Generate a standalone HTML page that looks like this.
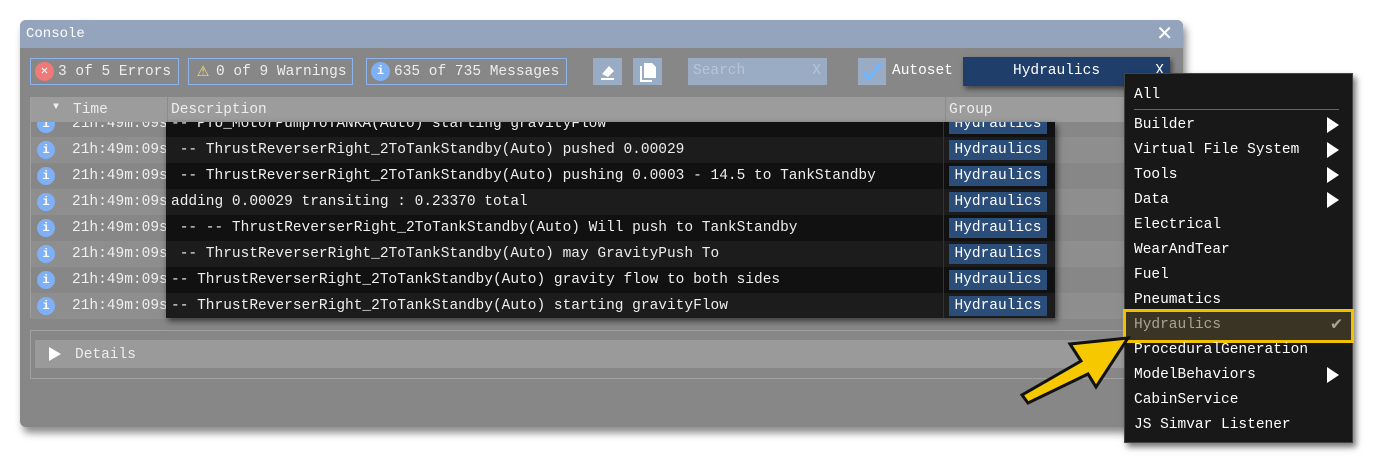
<!DOCTYPE html>
<html><head><style>
*{margin:0;padding:0;box-sizing:border-box}
body{width:1373px;height:464px;background:#fff;position:relative;overflow:hidden;font-family:"Liberation Mono",monospace;font-size:14.5px;color:#eee}
.a{position:absolute}
.win{left:20px;top:20px;width:1163px;height:407px;background:#878787;border-radius:6px;box-shadow:3px 6px 8px rgba(0,0,0,.45);overflow:hidden}
.title{left:0;top:0;width:1163px;height:28px;background:#95a4bd;color:#fff;font-size:14px;line-height:29px;padding-left:6px}
.btn{height:27px;border:1px solid #8fb4ec;white-space:nowrap;display:flex;align-items:center}
.ic{display:inline-block;width:19px;height:19px;border-radius:50%;text-align:center;line-height:19px;font-size:12px;color:#fff;margin:0 4px 0 4px;flex:none}
.row{position:absolute;left:11px;width:1140px;height:26px;line-height:26px}
.dot{position:absolute;left:6px;top:4px;width:18px;height:18px;border-radius:50%;background:#7fb0f5;color:#fff;text-align:center;line-height:18px;font-size:12px;font-weight:bold}
.tm{position:absolute;left:41px;color:#f0f0f0}
.dk{left:166px;top:122px;width:889px;height:196px;background:#111;box-shadow:2px 3px 6px rgba(0,0,0,.6);overflow:hidden}
.dr{position:absolute;left:0;width:889px;height:26px;line-height:26px;white-space:pre;padding-left:5px}
.tag{position:absolute;left:783px;top:3px;width:98px;height:20px;line-height:20px;background:#2a4d7a;text-align:center;color:#fff}
.dd{left:1124px;top:73px;width:229px;height:370px;background:#181818;border:1px solid #444;box-shadow:3px 4px 6px rgba(0,0,0,.55)}
.it{position:absolute;left:9px;height:25px;line-height:25px;color:#fff}
.tri{position:absolute;right:13px;width:0;height:0;border-left:12px solid #fff;border-top:8px solid transparent;border-bottom:8px solid transparent}
</style></head><body>
<div class="a win">
 <div class="a title">Console</div>
 <div class="a" style="right:10px;top:4px;color:#fff;font-size:20px;font-family:'Liberation Sans',sans-serif;line-height:20px">✕</div>
 <div class="a btn" style="left:10px;top:38px;width:149px"><span class="ic" style="background:#f07a7a">✕</span>3 of 5 Errors</div>
 <div class="a btn" style="left:168px;top:38px;width:165px"><span class="ic" style="background:none;color:#f2df7a;font-size:20px;width:20px;margin:0 3px 0 4px">⚠</span>0 of 9 Warnings</div>
 <div class="a btn" style="left:346px;top:38px;width:201px"><span class="ic" style="background:#7fb0f5;font-weight:bold">i</span>635 of 735 Messages</div>
 <div class="a" style="left:573px;top:38px;width:29px;height:27px;background:#9aabc4"></div>
 <svg class="a" style="left:578px;top:42px" width="20" height="20" viewBox="0 0 20 20"><path d="M4 12 L11 4 L16 9 L10 15 Z" fill="#fff"/><path d="M3 17 H16" stroke="#fff" stroke-width="2"/></svg>
 <div class="a" style="left:613px;top:38px;width:29px;height:27px;background:#9aabc4"></div>
 <svg class="a" style="left:617px;top:41px" width="22" height="22" viewBox="0 0 22 22"><path d="M7 2 H15 L19 6 V17 H7 Z" fill="#fff"/><path d="M4 5 V20 H15" stroke="#fff" stroke-width="2" fill="none"/></svg>
 <div class="a" style="left:668px;top:38px;width:139px;height:27px;background:#9aabc4;color:#b9c4d6;line-height:27px;padding-left:5px">Search<span style="position:absolute;right:6px">X</span></div>
 <div class="a" style="left:838px;top:38px;width:28px;height:27px;background:#9aabc4"></div>
 <svg class="a" style="left:840px;top:41px" width="24" height="22" viewBox="0 0 24 22"><path d="M3 11 L9 18 L21 2" stroke="#6fb6ff" stroke-width="3.5" fill="none"/></svg>
 <div class="a" style="left:872px;top:38px;line-height:27px;color:#fff">Autoset</div>
 <div class="a" style="left:943px;top:37px;width:207px;height:29px;background:#1f3f6a;line-height:29px;color:#fff;box-shadow:2px 3px 5px rgba(0,0,0,.5)"><span style="position:absolute;left:50px">Hydraulics</span><span style="position:absolute;right:6px">X</span></div>
 <div class="a" style="left:10px;top:77px;width:1150px;height:221px;border:1px solid #a0a0a0"></div>
 <div class="a" style="left:11px;top:77px;width:1140px;height:25px;background:#9c9c9c;line-height:27px">
  <span class="a" style="left:22px;top:-3px;font-size:10px">▼</span>
  <span class="a" style="left:42px">Time</span><span class="a" style="left:136px;top:0;height:25px;border-left:1px solid #8c8c8c"></span>
  <span class="a" style="left:140px">Description</span>
  <span class="a" style="left:918px">Group</span><span class="a" style="left:914px;height:25px;border-left:1px solid #8c8c8c"></span>
 </div>
 <div class="row" style="top:91px;height:26px;overflow:hidden;clip-path:inset(11px 0 0 0)"><div class="dot">i</div><span class="tm">21h:49m:09s</span></div>
 <div class="row" style="top:117px;background:#8e8e8e"><div class="dot">i</div><span class="tm">21h:49m:09s</span></div>
 <div class="row" style="top:143px"><div class="dot">i</div><span class="tm">21h:49m:09s</span></div>
 <div class="row" style="top:169px;background:#8e8e8e"><div class="dot">i</div><span class="tm">21h:49m:09s</span></div>
 <div class="row" style="top:195px"><div class="dot">i</div><span class="tm">21h:49m:09s</span></div>
 <div class="row" style="top:221px;background:#8e8e8e"><div class="dot">i</div><span class="tm">21h:49m:09s</span></div>
 <div class="row" style="top:247px"><div class="dot">i</div><span class="tm">21h:49m:09s</span></div>
 <div class="row" style="top:273px;background:#8e8e8e"><div class="dot">i</div><span class="tm">21h:49m:09s</span></div>
 <div class="a" style="left:10px;top:310px;width:1150px;height:49px;border:1px solid #a0a0a0"></div>
 <div class="a" style="left:15px;top:320px;width:1140px;height:28px;background:#9a9a9a;line-height:30px"><span class="a" style="left:14px;top:7px;border-left:12px solid #fff;border-top:7px solid transparent;border-bottom:7px solid transparent"></span><span class="a" style="left:40px">Details</span></div>
</div>
<div class="a dk">
 <div class="dr" style="top:-11px;background:#111">-- PTU_MotorPumpToTANKA(Auto) starting gravityFlow<div class="tag">Hydraulics</div></div>
 <div class="dr" style="top:15px;background:#1c1c1c"> -- ThrustReverserRight_2ToTankStandby(Auto) pushed 0.00029<div class="tag">Hydraulics</div></div>
 <div class="dr" style="top:41px;background:#111"> -- ThrustReverserRight_2ToTankStandby(Auto) pushing 0.0003 - 14.5 to TankStandby<div class="tag">Hydraulics</div></div>
 <div class="dr" style="top:67px;background:#1c1c1c">adding 0.00029 transiting : 0.23370 total<div class="tag">Hydraulics</div></div>
 <div class="dr" style="top:93px;background:#111"> -- -- ThrustReverserRight_2ToTankStandby(Auto) Will push to TankStandby<div class="tag">Hydraulics</div></div>
 <div class="dr" style="top:119px;background:#1c1c1c"> -- ThrustReverserRight_2ToTankStandby(Auto) may GravityPush To<div class="tag">Hydraulics</div></div>
 <div class="dr" style="top:145px;background:#111">-- ThrustReverserRight_2ToTankStandby(Auto) gravity flow to both sides<div class="tag">Hydraulics</div></div>
 <div class="dr" style="top:171px;background:#1c1c1c">-- ThrustReverserRight_2ToTankStandby(Auto) starting gravityFlow<div class="tag">Hydraulics</div></div>
 <div class="a" style="left:777px;top:0;height:196px;border-left:1px solid #333"></div>
</div>
<div class="a dd">
 <div class="it" style="top:9px">All</div>
 <div class="a" style="left:9px;top:35px;width:205px;border-top:1px solid #666"></div>
 <div class="it" style="top:39px">Builder</div><div class="tri" style="top:43px"></div>
 <div class="it" style="top:64px">Virtual File System</div><div class="tri" style="top:68px"></div>
 <div class="it" style="top:89px">Tools</div><div class="tri" style="top:93px"></div>
 <div class="it" style="top:114px">Data</div><div class="tri" style="top:118px"></div>
 <div class="it" style="top:139px">Electrical</div>
 <div class="it" style="top:164px">WearAndTear</div>
 <div class="it" style="top:189px">Fuel</div>
 <div class="it" style="top:214px">Pneumatics</div>
 <div class="a" style="left:-2px;top:235px;width:231px;height:34px;border:3px solid #f2c200;background:#3a3424"></div>
 <div class="it" style="top:239px;color:#aaa398">Hydraulics</div><div class="a" style="right:10px;top:239px;color:#aaa398;font-size:18px;line-height:25px">✔</div>
 <div class="it" style="top:264px">ProceduralGeneration</div>
 <div class="it" style="top:289px">ModelBehaviors</div><div class="tri" style="top:293px"></div>
 <div class="it" style="top:314px">CabinService</div>
 <div class="it" style="top:339px">JS Simvar Listener</div>
</div>
<svg class="a" style="left:1015px;top:330px" width="120" height="80" viewBox="0 0 120 80">
 <polygon points="113,8 55,14 66,31 7,65 13,73 73,44 81,57" fill="#f6c800" stroke="#111" stroke-width="3" stroke-linejoin="miter"/>
</svg>
</body></html>
